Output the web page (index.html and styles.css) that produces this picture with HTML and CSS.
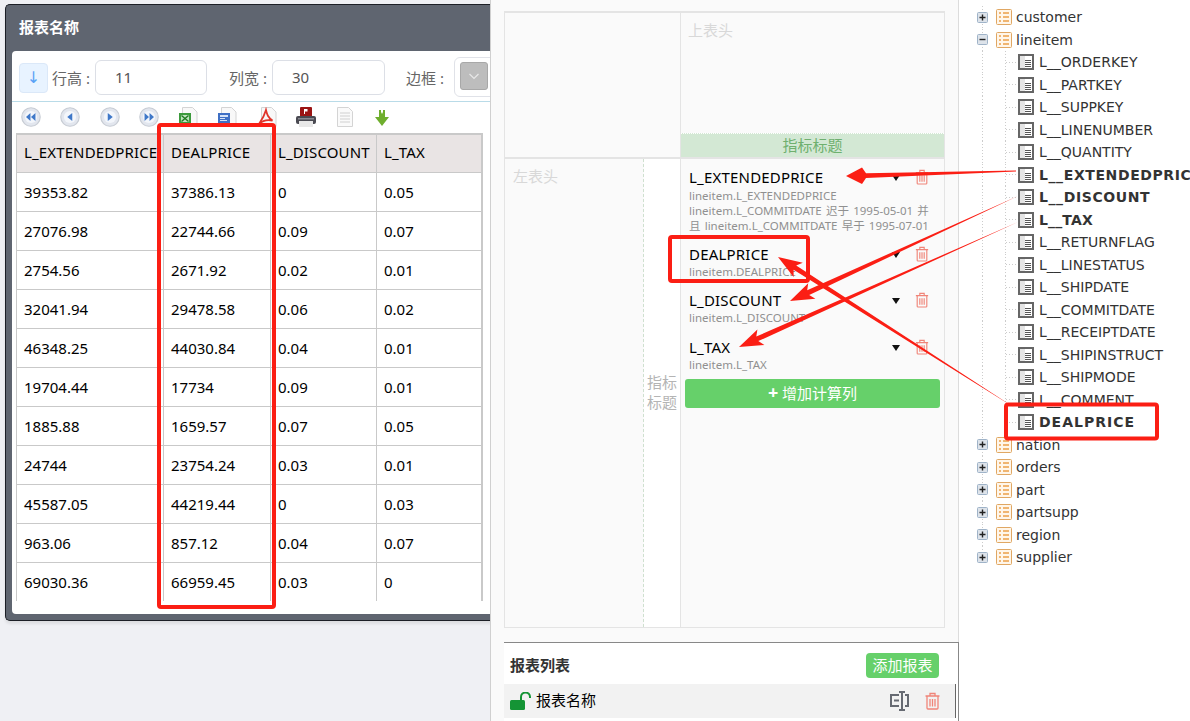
FILE: index.html
```html
<!DOCTYPE html>
<html lang="zh">
<head>
<meta charset="utf-8">
<title>报表名称</title>
<link rel="stylesheet" href="styles.css">
</head>
<body>
<svg class="defs" width="0" height="0">
  <defs>
    <symbol id="trash" viewBox="0 0 16 18"><path d="M1 4h14M5.500 3.500V1.500h5v2M2.500 4.500v11.500q0 1 1 1h9q1 0 1-1V4.500M5.500 7v7.500M8 7v7.500M10.500 7v7.500" fill="none" stroke="currentColor" stroke-width="1.300"/></symbol>
    <symbol id="folder" viewBox="0 0 16 16"><rect x=".5" y=".5" width="15" height="15" rx="1" fill="#fff6ea" stroke="#e0a763"/><path d="M3 4h2M3 8h2M3 12h2M7 4h6M7 8h6M7 12h6" stroke="#eba04a" stroke-width="1.500"/></symbol>
    <symbol id="leaf" viewBox="0 0 16 16"><rect x="1" y="1" width="14" height="14" fill="#fff" stroke="#666" stroke-width="2"/><rect x="2" y="2" width="5" height="12" fill="#e4e4e4"/><path d="M7 6.500h6M7 8.500h6M7 10.500h6M7 12.500h6" stroke="#555"/></symbol>
    <symbol id="plus" viewBox="0 0 11 11"><rect x=".5" y=".5" width="10" height="10" rx="1" fill="#dde3ea" stroke="#9fb3c8"/><path d="M2.500 5.500h6M5.500 2.500v6" stroke="#222" stroke-width="1.400"/></symbol>
    <symbol id="minus" viewBox="0 0 11 11"><rect x=".5" y=".5" width="10" height="10" rx="1" fill="#dde3ea" stroke="#9fb3c8"/><path d="M2.500 5.500h6" stroke="#222" stroke-width="1.400"/></symbol>
    <symbol id="nav" viewBox="0 0 18 18"><circle cx="9" cy="9" r="8.300" fill="#e2e6ee" stroke="#c7ccd4"/><circle cx="9" cy="9" r="5.500" fill="#f3f6fb"/></symbol>
  </defs>
</svg>

<div class="page">
  <section class="left">
    <div class="window">
      <h1 class="window-title">报表名称</h1>
      <div class="window-body">
        <div class="toolbar">
          <button class="down-btn" type="button">↓</button>
          <span class="lbl lbl-first">行高 :</span>
          <span class="field">11</span>
          <span class="lbl lbl-gap">列宽 :</span>
          <span class="field field-wide">30</span>
          <span class="lbl lbl-gap">边框 :</span>
          <span class="select"><span class="select-btn"><svg width="12" height="7" viewBox="0 0 12 7"><path d="M1.500 1l4.500 4.500L10.500 1" fill="none" stroke="#e8e8e8" stroke-width="1.200"/></svg></span></span>
        </div>
        <div class="icons">
          <svg class="ico" viewBox="0 0 18 18"><use href="#nav"/><path d="M8.500 5.500L4.500 9l4 3.500zM13 5.500L9 9l4 3.500z" fill="#3f78c8"/></svg>
          <svg class="ico" viewBox="0 0 18 18"><use href="#nav"/><path d="M11 5.500L6.500 9l4.500 3.500z" fill="#3f78c8"/></svg>
          <svg class="ico" viewBox="0 0 18 18"><use href="#nav"/><path d="M7 5.500L11.500 9 7 12.500z" fill="#3f78c8"/></svg>
          <svg class="ico" viewBox="0 0 18 18"><use href="#nav"/><path d="M5 5.500L9 9l-4 3.500zM9.500 5.500l4 3.500-4 3.500z" fill="#3f78c8"/></svg>
          <svg class="ico ico-doc" viewBox="0 0 20 20"><path d="M4.500 .5h10l4.500 4.500v14.500H4.500z" fill="#f8f8f8" stroke="#d4d4d4"/><rect x="1" y="6" width="12" height="11" fill="#3c9a3c"/><path d="M3 8h8v7H3z" fill="#bfe3bf"/><path d="M3.500 8.500l7 6M10.500 8.500l-7 6" stroke="#1f7a1f" stroke-width="1.400"/></svg>
          <svg class="ico ico-doc" viewBox="0 0 20 20"><path d="M4.500 .5h10l4.500 4.500v14.500H4.500z" fill="#f8f8f8" stroke="#d4d4d4"/><rect x="1" y="6" width="12" height="11" fill="#3f6fc4"/><path d="M3 8h8v2H3zM3 11h5v1H3zM3 13h7v1H3z" fill="#d5e2f7"/></svg>
          <svg class="ico ico-doc" viewBox="0 0 20 20"><path d="M4.500 .5h10l4.500 4.500v14.500H4.500z" fill="#f8f8f8" stroke="#d4d4d4"/><path d="M9 3c1 4 1.500 7 6.500 10.500C11 12.500 6 13 2 17c2-3 5-7 7-14z" fill="none" stroke="#e0352b" stroke-width="1.800"/></svg>
          <svg class="ico ico-doc" viewBox="0 0 20 20"><rect x="4" y="0" width="12" height="10" rx="1" fill="#9b1414"/><path d="M8 2h3.500v2.500H9V7H8z" fill="#fff"/><rect x="0" y="9" width="20" height="8" rx="2" fill="#4a4a52"/><rect x="3" y="14" width="14" height="6" fill="#e8e8e8"/><rect x="2" y="11" width="16" height="1.500" fill="#8a8a92"/></svg>
          <svg class="ico ico-doc" viewBox="0 0 20 20"><path d="M2.500 .5h11l4 4v15h-15z" fill="#fafafa" stroke="#d4d4d4"/><path d="M5 6h10M5 9h10M5 12h10M5 15h10" stroke="#d0d0d0"/></svg>
          <svg class="ico ico-small" viewBox="0 0 16 18"><path d="M5 1h2v4l1-2 1 2V1h2v7h4l-7 9-7-9h4z" fill="#6fae2e"/></svg>
        </div>
        <table class="report">
          <colgroup><col class="c1"><col class="c2"><col class="c3"><col class="c4"></colgroup>
          <thead><tr><th>L_EXTENDEDPRICE</th><th>DEALPRICE</th><th>L_DISCOUNT</th><th>L_TAX</th></tr></thead>
          <tbody>
            <tr><td>39353.82</td><td>37386.13</td><td>0</td><td>0.05</td></tr>
            <tr><td>27076.98</td><td>22744.66</td><td>0.09</td><td>0.07</td></tr>
            <tr><td>2754.56</td><td>2671.92</td><td>0.02</td><td>0.01</td></tr>
            <tr><td>32041.94</td><td>29478.58</td><td>0.06</td><td>0.02</td></tr>
            <tr><td>46348.25</td><td>44030.84</td><td>0.04</td><td>0.01</td></tr>
            <tr><td>19704.44</td><td>17734</td><td>0.09</td><td>0.01</td></tr>
            <tr><td>1885.88</td><td>1659.57</td><td>0.07</td><td>0.05</td></tr>
            <tr><td>24744</td><td>23754.24</td><td>0.03</td><td>0.01</td></tr>
            <tr><td>45587.05</td><td>44219.44</td><td>0</td><td>0.03</td></tr>
            <tr><td>963.06</td><td>857.12</td><td>0.04</td><td>0.07</td></tr>
            <tr><td>69030.36</td><td>66959.45</td><td>0.03</td><td>0</td></tr>
          </tbody>
        </table>
      </div>
    </div>
  </section>

  <section class="middle">
    <div class="designer">
      <div class="corner"></div>
      <div class="top-head">
        <span class="hint">上表头</span>
        <div class="metric-bar">指标标题</div>
      </div>
      <div class="left-head"><span class="hint">左表头</span></div>
      <div class="metric-side">指标<br>标题</div>
      <div class="metrics">
        <div class="metric metric-first">
          <div class="metric-name">L_EXTENDEDPRICE</div>
          <div class="metric-sub">lineitem.L_EXTENDEDPRICE<br>lineitem.L_COMMITDATE 迟于 1995-05-01 并且 lineitem.L_COMMITDATE 早于 1995-07-01</div>
          <i class="caret"></i><svg class="trash"><use href="#trash"/></svg>
        </div>
        <div class="metric">
          <div class="metric-name">DEALPRICE</div>
          <div class="metric-sub">lineitem.DEALPRICE</div>
          <i class="caret"></i><svg class="trash"><use href="#trash"/></svg>
        </div>
        <div class="metric">
          <div class="metric-name">L_DISCOUNT</div>
          <div class="metric-sub">lineitem.L_DISCOUNT</div>
          <i class="caret"></i><svg class="trash"><use href="#trash"/></svg>
        </div>
        <div class="metric metric-last">
          <div class="metric-name">L_TAX</div>
          <div class="metric-sub">lineitem.L_TAX</div>
          <i class="caret"></i><svg class="trash"><use href="#trash"/></svg>
        </div>
        <button class="add-col" type="button"><b>+</b> 增加计算列</button>
      </div>
    </div>
    <div class="reports">
      <div class="reports-head">
        <span class="reports-title">报表列表</span>
        <button class="add-report" type="button">添加报表</button>
      </div>
      <div class="report-row">
        <svg class="lock" width="21" height="18" viewBox="0 0 21 18"><path d="M11 8V5a4.500 4.500 0 0 1 9 0v1" fill="none" stroke="#149435" stroke-width="2"/><rect x="0" y="8" width="15" height="10" rx="1.500" fill="#149435"/></svg>
        <span class="report-name">报表名称</span>
        <svg class="rename" width="19" height="20" viewBox="0 0 19 20"><path d="M9 4H1v11h8M15 4h3v11h-3" fill="none" stroke="#666a72" stroke-width="2"/><path d="M9 1h6M9 19h6M12 1v18" fill="none" stroke="#666a72" stroke-width="2"/><path d="M4 9.500h5" stroke="#666a72" stroke-width="2"/></svg>
        <svg class="row-trash"><use href="#trash"/></svg>
      </div>
    </div>
  </section>

  <aside class="tree">
    <div class="node top"><svg class="tg"><use href="#plus"/></svg><svg class="fd"><use href="#folder"/></svg><span>customer</span></div>
    <div class="node top"><svg class="tg"><use href="#minus"/></svg><svg class="fd"><use href="#folder"/></svg><span>lineitem</span></div>
    <div class="node sub"><svg class="lf"><use href="#leaf"/></svg><span>L__ORDERKEY</span></div>
    <div class="node sub"><svg class="lf"><use href="#leaf"/></svg><span>L__PARTKEY</span></div>
    <div class="node sub"><svg class="lf"><use href="#leaf"/></svg><span>L__SUPPKEY</span></div>
    <div class="node sub"><svg class="lf"><use href="#leaf"/></svg><span>L__LINENUMBER</span></div>
    <div class="node sub"><svg class="lf"><use href="#leaf"/></svg><span>L__QUANTITY</span></div>
    <div class="node sub strong"><svg class="lf"><use href="#leaf"/></svg><span>L__EXTENDEDPRICE</span></div>
    <div class="node sub strong"><svg class="lf"><use href="#leaf"/></svg><span>L__DISCOUNT</span></div>
    <div class="node sub strong tight"><svg class="lf"><use href="#leaf"/></svg><span>L__TAX</span></div>
    <div class="node sub"><svg class="lf"><use href="#leaf"/></svg><span>L__RETURNFLAG</span></div>
    <div class="node sub"><svg class="lf"><use href="#leaf"/></svg><span>L__LINESTATUS</span></div>
    <div class="node sub"><svg class="lf"><use href="#leaf"/></svg><span>L__SHIPDATE</span></div>
    <div class="node sub"><svg class="lf"><use href="#leaf"/></svg><span>L__COMMITDATE</span></div>
    <div class="node sub"><svg class="lf"><use href="#leaf"/></svg><span>L__RECEIPTDATE</span></div>
    <div class="node sub"><svg class="lf"><use href="#leaf"/></svg><span>L__SHIPINSTRUCT</span></div>
    <div class="node sub"><svg class="lf"><use href="#leaf"/></svg><span>L__SHIPMODE</span></div>
    <div class="node sub"><svg class="lf"><use href="#leaf"/></svg><span>L__COMMENT</span></div>
    <div class="node sub strong wide"><svg class="lf"><use href="#leaf"/></svg><span>DEALPRICE</span></div>
    <div class="node top"><svg class="tg"><use href="#plus"/></svg><svg class="fd"><use href="#folder"/></svg><span>nation</span></div>
    <div class="node top"><svg class="tg"><use href="#plus"/></svg><svg class="fd"><use href="#folder"/></svg><span>orders</span></div>
    <div class="node top"><svg class="tg"><use href="#plus"/></svg><svg class="fd"><use href="#folder"/></svg><span>part</span></div>
    <div class="node top"><svg class="tg"><use href="#plus"/></svg><svg class="fd"><use href="#folder"/></svg><span>partsupp</span></div>
    <div class="node top"><svg class="tg"><use href="#plus"/></svg><svg class="fd"><use href="#folder"/></svg><span>region</span></div>
    <div class="node top last"><svg class="tg"><use href="#plus"/></svg><svg class="fd"><use href="#folder"/></svg><span>supplier</span></div>
  </aside>

  <svg class="marks" width="1190" height="721" viewBox="0 0 1190 721">
    <g fill="none" stroke="#fb1e14" stroke-width="4">
      <rect x="159" y="125" width="115" height="482" rx="2"/>
      <rect x="670" y="237" width="138" height="44" rx="2"/>
      <rect x="1006" y="404.500" width="151" height="34" rx="2"/>
    </g>
    <g fill="#fb1e14">
      <path d="M1016 170.600L866 173.200 862 167.500 846 176 862 184 866 178 1016 171.400z"/>
      <path d="M1018 196L809.200 294.900 815.400 298.700 790 301 808.200 283.300 807.200 290.300z"/>
      <path d="M1018 222L758.300 341.100 764.400 345 739 347 757.400 329.400 756.300 336.500z"/>
      <path d="M1015 408L796.200 265.600 802.800 262.700 778 257 793.600 277.100 793.600 269.800z"/>
    </g>
  </svg>
</div>
</body>
</html>
```

FILE: styles.css
```css
* { box-sizing: border-box; }
html, body { margin: 0; padding: 0; }
body {
  width: 1190px;
  height: 721px;
  overflow: hidden;
  background: #fff;
  font-family: "Noto Sans", "Noto Sans CJK SC", sans-serif;
  font-size: 14px;
  color: #000;
}
.defs { display: block; height: 0; }
.page {
  position: relative;
  width: 1190px;
  height: 721px;
  display: grid;
  grid-template-columns: 490px 469px 231px;
  overflow: hidden;
}

/* left */
.left {
  background: #eff0f4;
  overflow: hidden;
  padding: 4px 0 0 5px;
}
.window {
  width: 560px;
  height: 617px;
  background: #5f6570;
  border: 1px solid #1c1f26;
  border-width: 1px 0 1px 1px;
  border-radius: 5px;
  padding: 0 0 6px 6px;
  display: flex;
  flex-direction: column;
  box-shadow: 0 3px 3px rgba(0, 0, 0, .08);
}
.window-title {
  margin: 0;
  height: 46px;
  flex: none;
  line-height: 44px;
  padding-left: 7px;
  font-size: 15px;
  font-weight: 700;
  color: #fff;
}
.window-body {
  flex: 1;
  background: #fff;
  border-radius: 4px 0 0 4px;
}
.toolbar {
  height: 51px;
  border-bottom: 1px solid #b9dbe8;
  display: flex;
  align-items: center;
  padding: 2px 0 0 7px;
  color: #666;
  font-size: 15px;
  white-space: nowrap;
}
.down-btn {
  width: 29px;
  height: 30px;
  padding: 0;
  border: 1px solid #dbe8f8;
  border-radius: 4px;
  background: #e8f3ff;
  color: #5aa2f6;
  font: 16px "DejaVu Sans", sans-serif;
  margin-top: 1px;
}
.lbl { display: inline-block; width: 43px; flex: none; }
.lbl-first { margin-left: 4px; }
.lbl-gap { margin-left: 22px; }
.lbl-gap ~ .lbl-gap { margin-left: 21px; margin-right: 5px; }
.field {
  width: 112px;
  height: 35px;
  flex: none;
  border: 1px solid #dcdfe6;
  border-radius: 6px;
  line-height: 33px;
  padding-left: 19px;
  color: #555;
}
.field-wide { width: 113px; }
.select {
  width: 60px;
  height: 40px;
  flex: none;
  border: 1px solid #e0e2e8;
  border-radius: 6px;
  padding: 4px 0 0 5px;
}
.select-btn {
  display: flex;
  align-items: center;
  justify-content: center;
  width: 28px;
  height: 28px;
  background: #bdbdbd;
  border: 1px solid #a8a8a8;
  border-radius: 3px;
}
.icons {
  height: 31px;
  display: flex;
  align-items: center;
  gap: 19.300px;
  padding: 0 0 2px 9px;
}
.ico { width: 20px; height: 20px; flex: none; }
.ico-doc { margin-top: 1px; }
.ico-small { width: 16px; height: 18px; margin: 3px 0 0 -1px; }
.report {
  margin-left: 4px;
  width: 467px;
  table-layout: fixed;
  border-collapse: separate;
  border-spacing: 0;
  border: 2px solid #c9c9c9;
  border-left-width: 1px;
  border-bottom: 0;
  font-size: 15px;
}
.c1 { width: 147px; }
.c2 { width: 107px; }
.c3 { width: 106px; }
.c4 { width: 104px; }
.report th, .report td {
  height: 39px;
  padding: 0 0 0 7px;
  border-right: 1px solid #c9c9c9;
  border-bottom: 1px solid #c9c9c9;
  text-align: left;
  font-weight: 400;
  white-space: nowrap;
  overflow: hidden;
}
.report th { background: #e9e4e4; height: 38px; letter-spacing: .13px; padding-bottom: 3px; }
.report th:last-child, .report td:last-child { border-right: 0; }
.report tr:last-child td { border-bottom: 0; height: 38px; padding-bottom: 1px; }

/* middle */
.middle {
  background: #fafafa;
  border-left: 1px solid #d0d0d0;
  border-right: 1px solid #dcdcdc;
  padding: 11px 0 0 13px;
  display: flex;
  flex-direction: column;
}
.designer {
  width: 441px;
  height: 617px;
  flex: none;
  border: 1px solid #e4e4e4;
  border-top-width: 2px;
  display: grid;
  grid-template-columns: 139px 37px 1fr;
  grid-template-rows: 146px 1fr;
}
.corner { grid-column: 1 / 3; border-right: 1px solid #e4e4e4; border-bottom: 2px solid #e4e4e4; }
.top-head {
  display: flex;
  flex-direction: column;
  justify-content: space-between;
  border-bottom: 2px solid #e4e4e4;
}
.hint { display: block; color: #d8d8d8; font-size: 15px; padding: 6px 0 0 7px; }
.metric-bar {
  height: 24px;
  line-height: 22px;
  text-align: center;
  background: #d3e8d4;
  border-top: 1px dotted #fff;
  color: #6fb06f;
  font-size: 15px;
}
.left-head { border-right: 1px dashed #cfe0cf; }
.left-head .hint { padding: 6px 0 0 8px; }
.metric-side {
  background: #fff;
  border-right: 1px solid #e4e4e4;
  color: #b4b4b4;
  font-size: 15px;
  line-height: 20px;
  padding-bottom: 2px;
  display: flex;
  align-items: center;
  justify-content: center;
  text-align: center;
}
.metrics { padding: 9px 0 0 4px; }
.metric { position: relative; padding: 0 10px 11.500px 4px; }
.metric-first { padding-bottom: 10.500px; }
.metric-last { padding-bottom: 7.500px; }
.metric-name { font-size: 15px; line-height: 18px; color: #000; letter-spacing: .2px; }
.metric-sub { margin-top: 2px; font-size: 11.500px; line-height: 15px; color: #909090; word-spacing: 1.200px; }
.metric:not(.metric-first) .metric-name { margin-top: 1px; }
.metric:not(.metric-first) .metric-sub { margin-top: 1px; }
.caret {
  position: absolute;
  left: 207px;
  top: 7px;
  width: 0;
  height: 0;
  border-style: solid;
  border-width: 6px 4.500px 0;
  border-color: #111 transparent transparent;
}
.trash {
  position: absolute;
  left: 230px;
  top: 1px;
  width: 14px;
  height: 16px;
  color: #f08478;
}
.add-col {
  display: block;
  width: 255px;
  height: 29px;
  padding: 0 0 3px;
  border: 0;
  border-radius: 3px;
  background: #66d06a;
  color: #fff;
  font: 15px "Noto Sans", "Noto Sans CJK SC", sans-serif;
}
.add-col b { font-size: 18px; line-height: 18px; }
.reports {
  flex: 1;
  margin-top: 14px;
  background: #fff;
  border-top: 1px solid #888;
  border-right: 1px solid #888;
  margin-right: -1px;
}
.reports-head {
  height: 41px;
  padding: 10px 19px 0 6px;
  display: flex;
  justify-content: space-between;
  align-items: flex-start;
}
.reports-title { font-weight: 700; font-size: 15px; line-height: 25px; color: #333; }
.add-report {
  width: 73px;
  height: 25px;
  padding: 0 0 2px;
  border: 0;
  border-radius: 4px;
  background: #66d06a;
  color: #fff;
  font: 15px "Noto Sans", "Noto Sans CJK SC", sans-serif;
}
.report-row {
  height: 34px;
  width: 452px;
  background: #f2f2f2;
  border-right: 1px solid #666;
  display: flex;
  align-items: center;
  padding: 0 14px 0 6px;
}
.lock { flex: none; margin-right: 5px; }
.report-name { flex: 1; font-size: 15px; padding-bottom: 3px; }
.rename { flex: none; margin-right: 15px; }
.row-trash { flex: none; width: 17px; height: 18px; color: #f08478; }

/* tree */
.tree {
  background: #fff;
  padding: 6px 0 0 18px;
  overflow: hidden;
  font-family: "DejaVu Sans", sans-serif;
  font-size: 14px;
  color: #333;
  white-space: nowrap;
}
.node {
  height: 22.500px;
  display: flex;
  align-items: center;
  width: 230px;
  background-repeat: no-repeat;
  background-image: repeating-linear-gradient(to bottom, #ccc 0 1px, transparent 1px 3px);
  background-size: 1px 100%;
  background-position: 5px 0;
}
.node.last { background-size: 1px 50%; }
.tg { width: 11px; height: 11px; flex: none; margin-right: 8px; }
.fd { width: 16px; height: 16px; flex: none; margin-right: 4px; }
.sub {
  padding-left: 41px;
  background-image:
    repeating-linear-gradient(to bottom, #ccc 0 1px, transparent 1px 3px),
    repeating-linear-gradient(to bottom, #ccc 0 1px, transparent 1px 3px),
    repeating-linear-gradient(to right, #ccc 0 1px, transparent 1px 3px);
  background-size: 1px 100%, 1px 100%, 12px 1px;
  background-position: 5px 0, 28px 0, 29px 50%;
}
.lf { width: 16px; height: 16px; flex: none; margin-right: 5px; }
.strong span { font-weight: 700; letter-spacing: .6px; }
.tight span { letter-spacing: .15px; }
.wide span { letter-spacing: 1px; }

/* annotations over the page */
.marks { position: absolute; left: 0; top: 0; pointer-events: none; }
```
